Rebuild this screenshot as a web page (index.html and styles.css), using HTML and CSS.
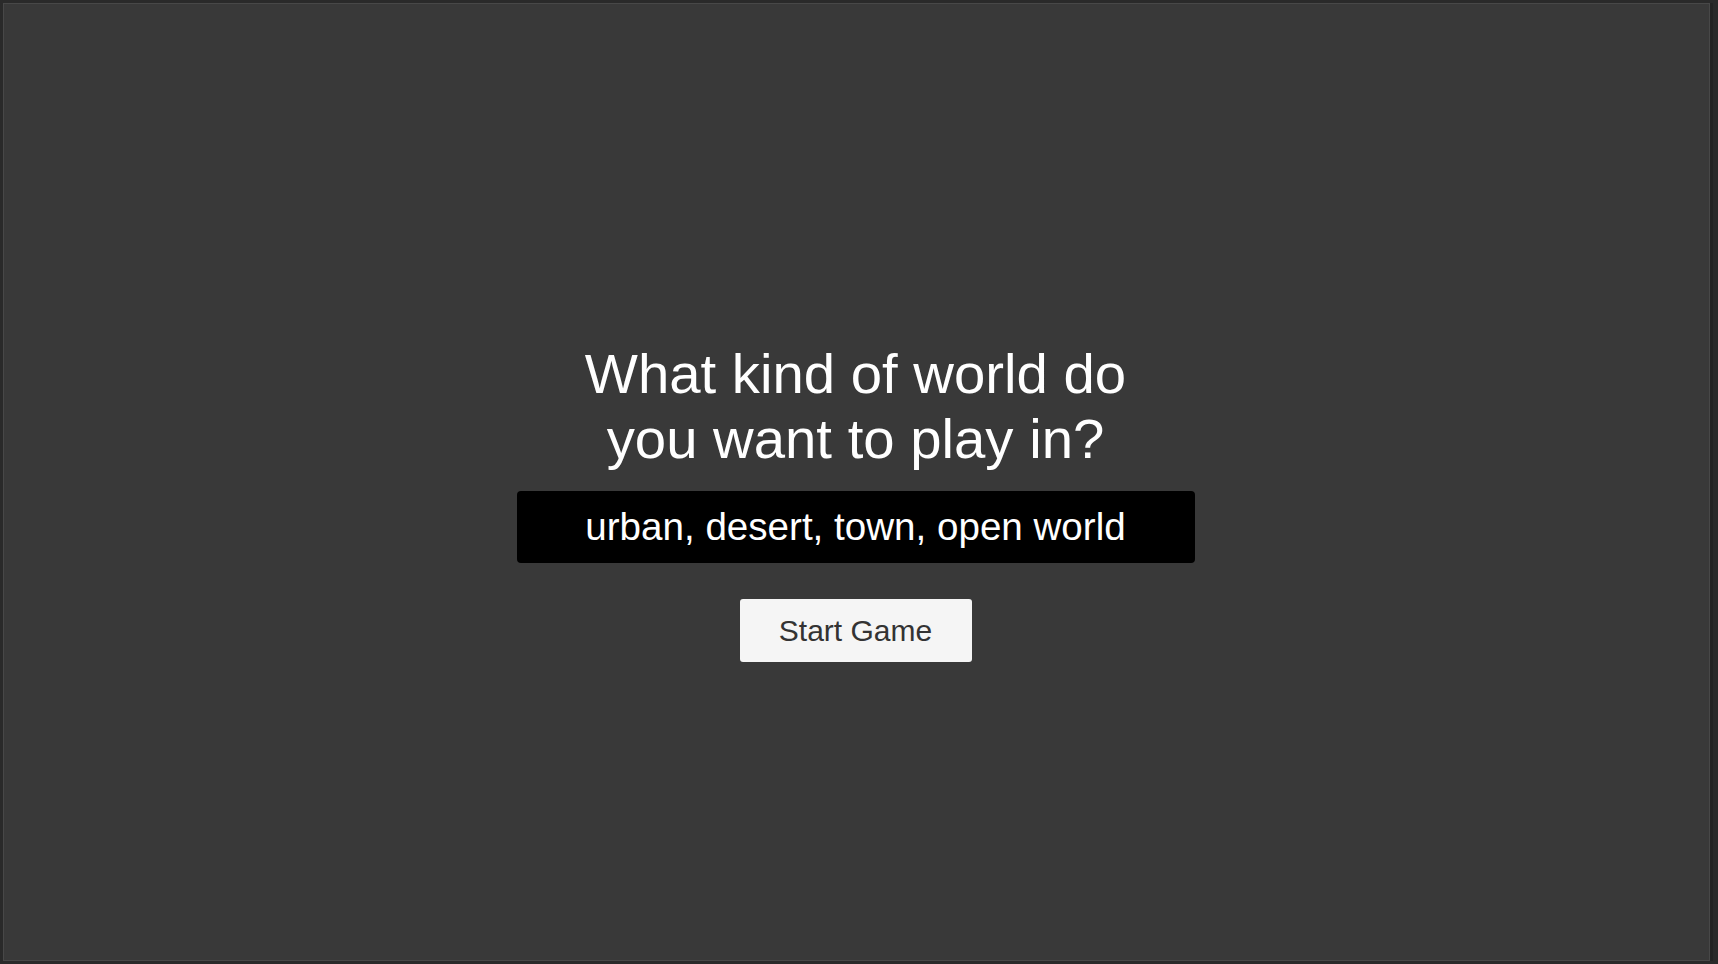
FILE: index.html
```html
<!DOCTYPE html>
<html lang="en">
<head>
<meta charset="utf-8">
<title>World Select</title>
<link rel="stylesheet" href="styles.css">
</head>
<body>
<div class="frame">
  <main class="menu">
    <h1 class="question">What kind of world do<br>you want to play in?</h1>
    <input class="world-input" type="text" value="urban, desert, town, open world">
    <button class="start-btn" type="button">Start Game</button>
  </main>
</div>
</body>
</html>
```
FILE: styles.css
```css
html, body {
  margin: 0;
  padding: 0;
  height: 100%;
}

body {
  background: #2a2a2a;
  font-family: "Liberation Sans", Arial, sans-serif;
  overflow: hidden;
}

.frame {
  box-sizing: border-box;
  margin: 3px 8px 0 3px;
  height: 958px;
  background: #393939;
  border: 1px solid #484848;
  box-shadow: 3px 0 0 #232323;
}

.menu {
  display: flex;
  flex-direction: column;
  align-items: center;
  padding-top: 337px;
  padding-right: 2px;
}

.question {
  margin: 0;
  font-size: 56.3px;
  line-height: 65px;
  font-weight: normal;
  color: #ffffff;
  text-align: center;
}

.world-input {
  box-sizing: border-box;
  margin-top: 20px;
  width: 678px;
  height: 72px;
  padding: 0;
  border: none;
  border-radius: 4px;
  background: #000000;
  color: #ffffff;
  font-family: "Liberation Sans", Arial, sans-serif;
  font-size: 38.6px;
  text-align: center;
  outline: none;
}

.start-btn {
  margin-top: 36px;
  width: 232px;
  height: 63px;
  padding: 0;
  border: none;
  border-radius: 3px;
  background: #f5f5f5;
  color: #333333;
  font-family: "Liberation Sans", Arial, sans-serif;
  font-size: 30px;
  cursor: pointer;
}
```
